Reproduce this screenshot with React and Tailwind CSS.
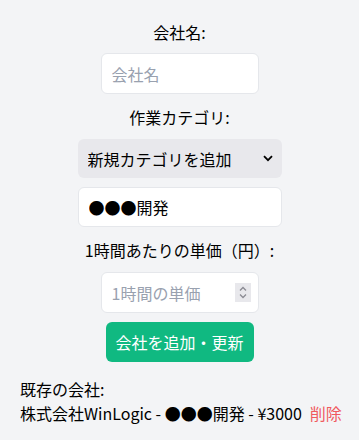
import { useState } from 'react'

const FONT = { fontFamily: '"Noto Sans CJK JP", "Noto Sans", sans-serif' }

export default function App() {
  const [name, setName] = useState('')
  const [category, setCategory] = useState('new')
  const [newCategory, setNewCategory] = useState('●●●開発')
  const [rate, setRate] = useState('')
  const [companies, setCompanies] = useState([
    { id: 1, name: '株式会社WinLogic', category: '●●●開発', rate: 3000 },
  ])

  return (
    <div className="min-h-[440px] bg-[#f3f4f6] text-black text-base" style={FONT}>
      <div className="flex flex-col items-center pt-5">
        <label className="h-6 leading-6">会社名:</label>
        <input
          className="mt-[9px] w-[158px] h-[41px] bg-white border border-gray-200 rounded-md px-2.5 outline-none placeholder:text-gray-400"
          placeholder="会社名"
          value={name}
          onChange={e => setName(e.target.value)}
        />

        <label className="mt-[11px] h-6 leading-6">作業カテゴリ:</label>
        <div className="relative mt-[10px] w-[204px] h-[39px]">
          <select
            className="appearance-none w-full h-full bg-[#e8e8ec] rounded-md pl-2.5 pr-8 outline-none"
            value={category}
            onChange={e => setCategory(e.target.value)}
          >
            <option value="new">新規カテゴリを追加</option>
            <option value="dev">●●●開発</option>
          </select>
          <svg className="absolute right-[9px] top-[16px] w-[10px] h-[7px] pointer-events-none" viewBox="0 0 10 7" fill="none" stroke="black" strokeWidth="1.8">
            <path d="M1 1.2l4 4 4-4" />
          </svg>
        </div>
        <input
          className="mt-[9px] w-[204px] h-[40px] bg-white border border-gray-200 rounded-md px-2.5 outline-none"
          value={newCategory}
          onChange={e => setNewCategory(e.target.value)}
        />

        <label className="mt-[11px] h-6 leading-6">1時間あたりの単価（円）:</label>
        <div className="mt-[10px] w-[158px] h-[41px] bg-white border border-gray-200 rounded-md pl-2.5 pr-[7px] flex items-center">
          <input
            className="flex-1 min-w-0 outline-none bg-transparent placeholder:text-gray-400"
            placeholder="1時間の単価"
            value={rate}
            onChange={e => setRate(e.target.value.replace(/[^0-9]/g, ''))}
          />
          <div className="w-[16px] h-[19px] bg-[#e8e8ec] flex items-center justify-center">
            <svg className="w-[8px] h-[13px]" viewBox="0 0 8 13" fill="none" stroke="#8b8b93" strokeWidth="1.3">
              <path d="M1 4.5l3-3 3 3M1 8.5l3 3 3-3" />
            </svg>
          </div>
        </div>

        <button
          className="mt-[9px] w-[148px] h-[40px] bg-[#10b981] text-white rounded-md"
          onClick={() => {
            if (!name.trim()) return
            setCompanies([...companies, { id: Date.now(), name, category: newCategory, rate: parseInt(rate) || 0 }])
            setName('')
            setRate('')
          }}
        >
          会社を追加・更新
        </button>
      </div>

      <div className="px-5 mt-[15px]">
        <div className="h-6 leading-6">既存の会社:</div>
        {companies.map(c => (
          <div key={c.id} className="h-6 leading-6 whitespace-nowrap">
            {c.name} - {c.category} - ¥{c.rate}
            <button
              className="ml-2 text-[#f05a5f]"
              onClick={() => setCompanies(companies.filter(x => x.id !== c.id))}
            >削除</button>
          </div>
        ))}
      </div>
    </div>
  )
}
